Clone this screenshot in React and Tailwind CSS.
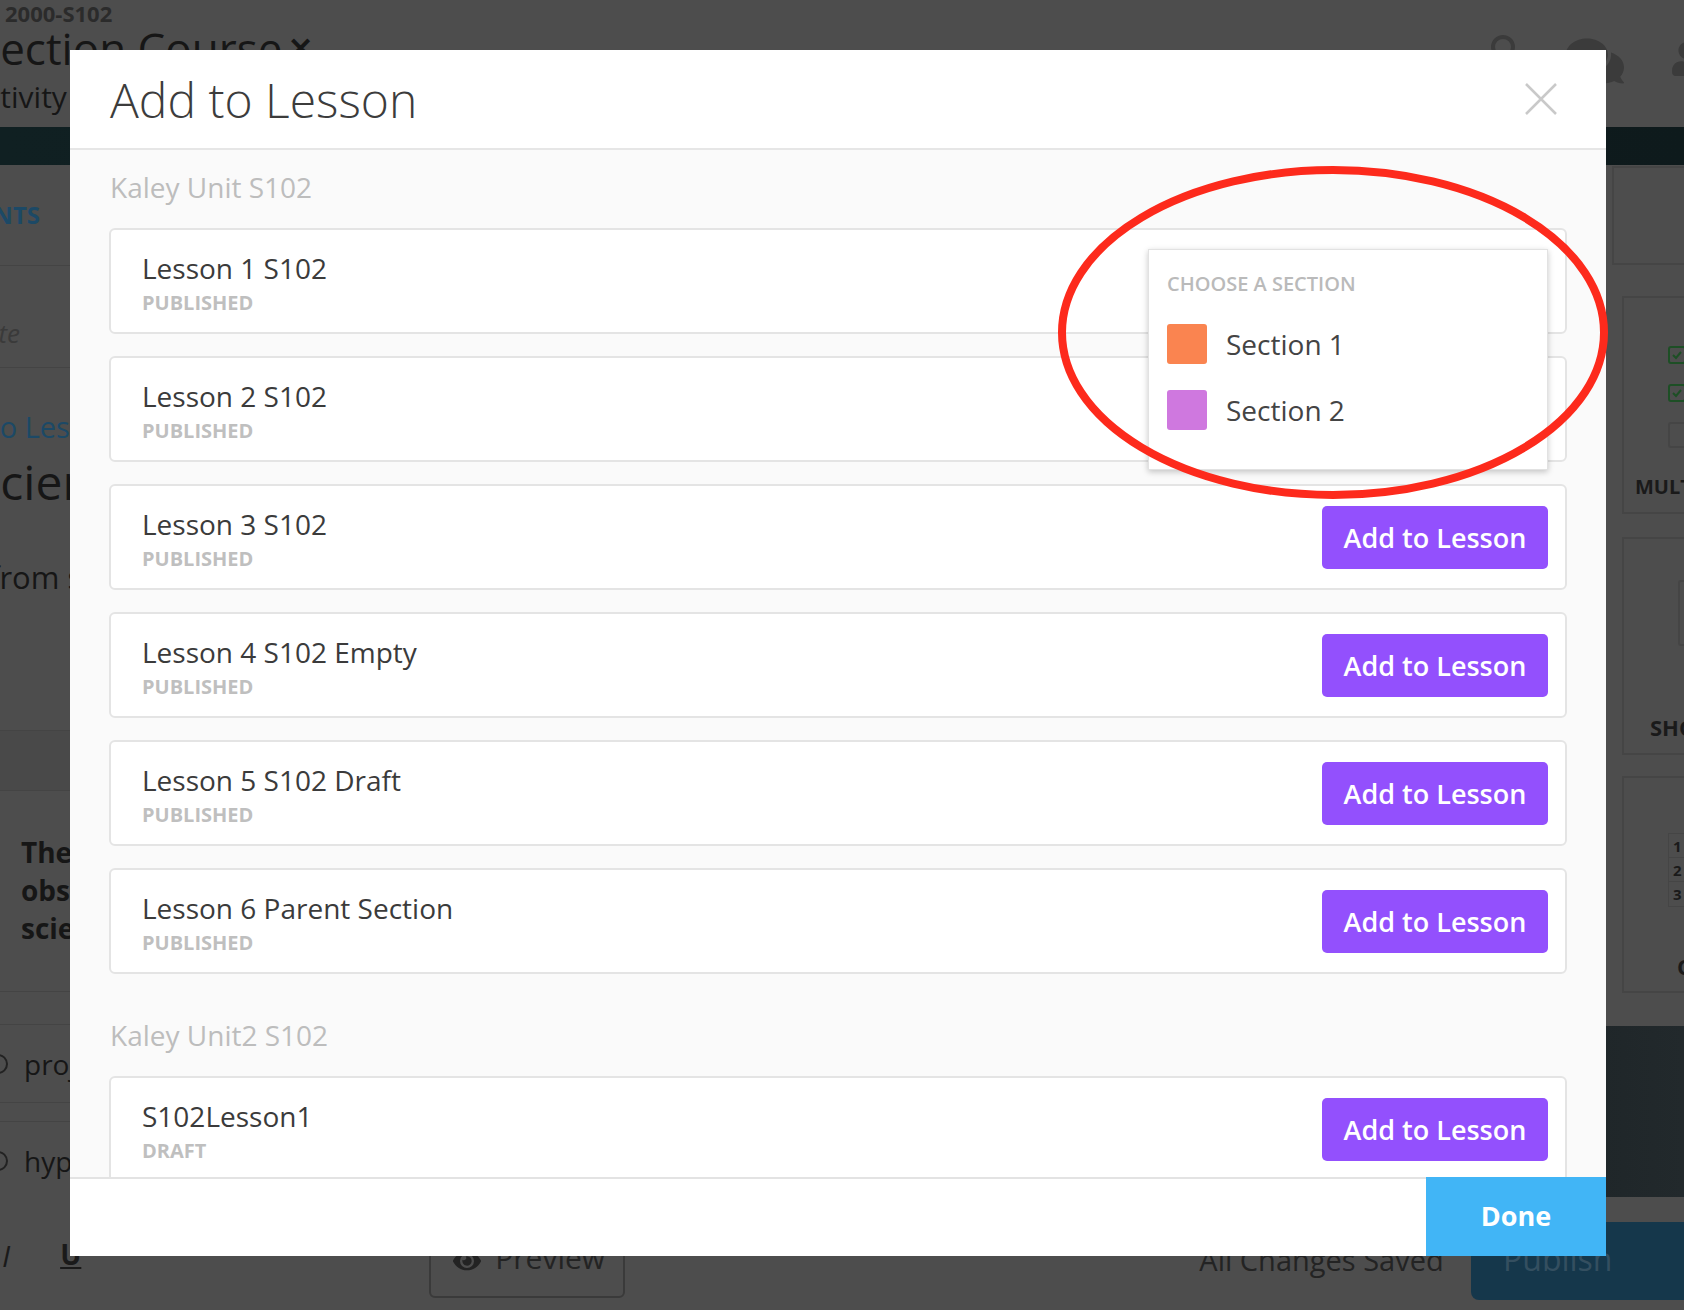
import React from "react";
import { FaComments, FaUser, FaEye } from "react-icons/fa";

const unit1 = [
  ["Lesson 1 S102", "PUBLISHED"],
  ["Lesson 2 S102", "PUBLISHED"],
  ["Lesson 3 S102", "PUBLISHED"],
  ["Lesson 4 S102 Empty", "PUBLISHED"],
  ["Lesson 5 S102 Draft", "PUBLISHED"],
  ["Lesson 6 Parent Section", "PUBLISHED"],
];
const unit2 = [["S102Lesson1", "DRAFT"]];

function LessonCard({ title, status }) {
  return (
    <div className="h-[106px] shrink-0 border-2 border-[#e4e4e4] rounded-[6px] bg-white flex items-center justify-between pl-[31px] pr-[17px]">
      <div className="self-stretch pt-[22px]">
        <div className="text-[28px] leading-[32px] text-[#3b3b3b]">{title}</div>
        <div className="mt-[7px] text-[20px] leading-[24px] font-bold text-[#bfbfbf]">{status}</div>
      </div>
      <button className="w-[226px] h-[63px] rounded-[5px] bg-[#9350fd] text-white text-[27px] font-semibold leading-none">
        Add to Lesson
      </button>
    </div>
  );
}

function Check() {
  return (
    <svg width="18" height="18" viewBox="0 0 18 18">
      <rect x="1" y="1" width="16" height="16" rx="2" fill="none" stroke="#1d4f25" strokeWidth="2" />
      <path d="M5 9l3 3 5-6" fill="none" stroke="#1d4f25" strokeWidth="2" />
    </svg>
  );
}

export default function App() {
  return (
    <div className="relative w-[1684px] h-[1310px] overflow-hidden bg-[#4d4d4d] font-['Open_Sans',sans-serif]">
      {/* dimmed background page */}
      <div className="flex flex-col h-full">
        <header className="h-[127px] flex justify-between">
          <div className="whitespace-nowrap">
            <div className="pl-[5px] text-[22px] leading-[26px] font-bold text-[#2b2b2b]">2000-S102</div>
            <div className="-mt-[4px] ml-[-24px] text-[44px] leading-[52px] text-[#161616] flex items-center">
              Section Course
              <span className="ml-[6px] text-[30px] font-bold">✕</span>
            </div>
            <div className="mt-[5px] ml-[-33px] text-[30px] leading-[36px] text-[#161616]">Activity</div>
          </div>
          <div className="flex items-start gap-[46px] pt-[30px] mr-[-20px]">
            <svg width="30" height="30" viewBox="0 0 30 30" className="mt-[4px]">
              <circle cx="13" cy="13" r="10" fill="none" stroke="#3b3b3b" strokeWidth="4" />
            </svg>
            <FaComments className="text-[#3b3b3b] mt-[2px]" size={58} />
            <FaUser className="text-[#3b3b3b] mt-[12px]" size={34} />
          </div>
        </header>
        <div className="h-[38px] bg-gradient-to-r from-[#102022] to-[#0e1a1c]" />
        <div className="flex h-[1035px]">
          {/* left column */}
          <div className="w-[400px] flex flex-col text-[#161616]">
            <div className="h-[101px] border-b border-[#444] flex items-center">
              <div className="w-[40px] overflow-hidden flex justify-end whitespace-nowrap text-[24px] font-bold text-[#1c4966]">ASSIGNMENTS</div>
            </div>
            <div className="h-[102px] border-b border-[#444] pt-[50px]">
              <div className="w-[20px] overflow-hidden flex justify-end whitespace-nowrap text-[26px] leading-[34px] italic text-[#3a3a3a]">Add a note</div>
            </div>
            <div className="h-[363px] border-b border-[#444] pt-[40px] whitespace-nowrap">
              <div className="ml-[-72px] text-[29px] leading-[38px] text-[#1c4966]">Add to Lesson</div>
              <div className="mt-[8px] ml-[-26px] text-[48px] leading-[56px]">Science Lesson</div>
              <div className="mt-[47px] ml-[-11px] text-[31px] leading-[40px]">from student work</div>
            </div>
            <div className="h-[60px] border-b border-[#444] bg-[#494949]" />
            <div className="h-[201px] border-b border-[#444] pt-[42px] pl-[21px] text-[28px] leading-[38px] font-bold whitespace-nowrap">
              <div>The scientific method</div>
              <div>observations by</div>
              <div>scientists</div>
            </div>
            <div className="h-[33px] border-b border-[#444]" />
            <div className="h-[78px] border-b border-[#444] flex items-center text-[28px] whitespace-nowrap">
              <span className="ml-[-12px] w-[20px] h-[20px] rounded-full border-2 border-[#222]" />
              <span className="ml-[16px]">projects</span>
            </div>
            <div className="h-[19px] border-b border-[#444]" />
            <div className="h-[78px] flex items-center text-[28px] whitespace-nowrap">
              <span className="ml-[-12px] w-[20px] h-[20px] rounded-full border-2 border-[#222]" />
              <span className="ml-[16px]">hypothesis</span>
            </div>
          </div>
          {/* right column */}
          <div className="ml-auto w-[184px] flex flex-col">
            <div className="mt-[1px] h-[99px] ml-[112px] w-[200px] shrink-0 border-2 border-[#454545]" />
            <div className="mt-[31px] h-[218px] ml-[122px] w-[200px] shrink-0 border-2 border-[#454545] relative">
              <div className="pl-[44px] pt-[48px] flex flex-col gap-[20px]">
                <Check />
                <Check />
                <div className="w-[30px] h-[26px] border-2 border-[#454545] rounded-[3px]" />
              </div>
              <div className="absolute left-[11px] top-[174px] text-[20px] font-bold text-[#1a1a1a] whitespace-nowrap">MULTIPLE CHOICE</div>
            </div>
            <div className="mt-[23px] h-[218px] ml-[122px] w-[200px] shrink-0 border-2 border-[#454545] relative">
              <div className="ml-[54px] mt-[41px] w-[80px] h-[66px] border-2 border-[#454545] rounded-[3px]" />
              <div className="absolute left-[26px] top-[172px] text-[22px] font-bold text-[#1a1a1a] whitespace-nowrap">SHORT ANSWER</div>
            </div>
            <div className="mt-[21px] h-[217px] ml-[122px] w-[200px] shrink-0 border-2 border-[#454545] relative">
              <div className="ml-[44px] mt-[55px] w-[80px] flex flex-col border border-[#454545]">
                <div className="h-[24px] border-b border-[#454545] pl-[4px] text-[15px] font-bold text-[#1a1a1a] leading-[24px]">1</div>
                <div className="h-[24px] border-b border-[#454545] pl-[4px] text-[15px] font-bold text-[#1a1a1a] leading-[24px]">2</div>
                <div className="h-[24px] pl-[4px] text-[15px] font-bold text-[#1a1a1a] leading-[24px]">3</div>
              </div>
              <div className="absolute left-[53px] top-[172px] text-[22px] font-bold text-[#1a1a1a] whitespace-nowrap">CHART</div>
            </div>
            <div className="mt-[33px] h-[171px] shrink-0 bg-gradient-to-r from-[#1c2326] to-[#22292c]" />
          </div>
        </div>
        {/* bottom toolbar */}
        <div className="h-[110px] flex items-start whitespace-nowrap">
          <span className="ml-[2px] mt-[36px] text-[30px] italic text-[#1a1a1a] leading-[40px]">I</span>
          <span className="ml-[50px] mt-[34px] text-[28px] font-bold underline text-[#1a1a1a] leading-[40px]">U</span>
          <div className="ml-[348px] mt-[30px] w-[196px] h-[68px] rounded-[6px] border-2 border-[#3a3a3a] flex items-start pt-[6px] pl-[22px] gap-[14px] text-[30px] leading-[40px] text-[#232323]">
            <FaEye className="mt-[9px]" size={28} />
            <span>Preview</span>
          </div>
          <div className="ml-[574px] mt-[40px] text-[29px] leading-[40px] text-[#232323]">All Changes Saved</div>
          <div className="ml-auto mt-[22px] w-[213px] h-[78px] rounded-l-[8px] bg-[#15374b] pl-[32px] pt-[16px] text-[32px] leading-[42px] text-[#344f60]">Publish</div>
        </div>
      </div>

      {/* modal */}
      <div className="absolute left-[70px] top-[50px] w-[1536px] h-[1206px] bg-white flex flex-col">
        <div className="h-[100px] shrink-0 border-b-2 border-[#e6e6e6] flex items-center justify-between pl-[40px] pr-[49px] pt-[2px]">
          <h1 className="text-[48px] leading-[56px] font-light text-[#3c3c3c]">Add to Lesson</h1>
          <svg width="32" height="32" viewBox="0 0 32 32" className="-mt-[2px]">
            <path d="M1 1L31 31M31 1L1 31" stroke="#c9c9c9" strokeWidth="2.5" />
          </svg>
        </div>
        <div className="flex-1 min-h-0 overflow-hidden bg-[#fafafa] px-[39px] pt-[19px]">
          <div className="pl-[1px] text-[28px] leading-[36px] text-[#bdbdbd]">Kaley Unit S102</div>
          <div className="mt-[23px] flex flex-col gap-[22px]">
            {unit1.map(([t, s]) => (
              <LessonCard key={t} title={t} status={s} />
            ))}
          </div>
          <div className="mt-[43px] pl-[1px] text-[28px] leading-[36px] text-[#bdbdbd]">Kaley Unit2 S102</div>
          <div className="mt-[23px] flex flex-col gap-[22px]">
            {unit2.map(([t, s]) => (
              <LessonCard key={t} title={t} status={s} />
            ))}
          </div>
        </div>
        <div className="h-[79px] shrink-0 border-t-2 border-[#e3e3e3] flex justify-end">
          <button className="-mt-[2px] h-[79px] w-[180px] bg-[#41b5f6] text-white text-[27px] font-bold">Done</button>
        </div>

        {/* section dropdown */}
        <div className="absolute left-[1078px] top-[199px] w-[400px] h-[221px] bg-white border border-[#e2e2e2] shadow-[0_2px_6px_rgba(0,0,0,0.22)] pl-[18px] pt-[22px]">
          <div className="text-[20px] leading-[24px] font-semibold text-[#bababa]">CHOOSE A SECTION</div>
          <div className="mt-[28px] h-[40px] flex items-center gap-[19px]">
            <span className="w-[40px] h-[40px] rounded-[3px] bg-[#fa8450]" />
            <span className="text-[28px] leading-[40px] text-[#444]">Section 1</span>
          </div>
          <div className="mt-[26px] h-[40px] flex items-center gap-[19px]">
            <span className="w-[40px] h-[40px] rounded-[3px] bg-[#cf78df]" />
            <span className="text-[28px] leading-[40px] text-[#444]">Section 2</span>
          </div>
        </div>
      </div>

      {/* red annotation ellipse */}
      <svg className="absolute left-[1050px] top-[160px] pointer-events-none" width="570" height="346" viewBox="0 0 570 346">
        <ellipse cx="283" cy="172.5" rx="271" ry="162.5" fill="none" stroke="#fd2a1c" strokeWidth="8" />
      </svg>
    </div>
  );
}
